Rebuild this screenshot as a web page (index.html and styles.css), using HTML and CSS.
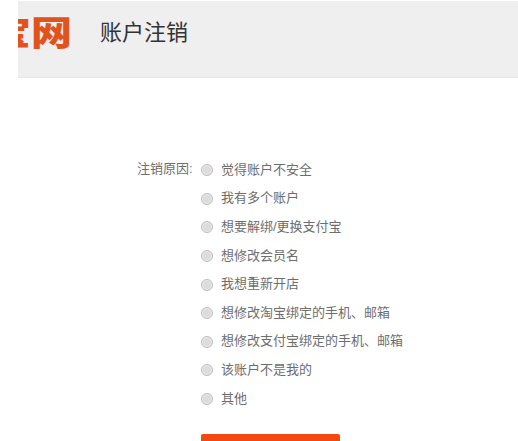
FILE: index.html
```html
<!DOCTYPE html>
<html lang="zh-CN">
<head>
  <meta charset="UTF-8">
  <title>账户注销</title>
  <link rel="stylesheet" href="styles.css">
</head>
<body>
  <header class="top">
    <div class="logo"><span>淘宝网</span></div>
    <h1>账户注销</h1>
  </header>
  <form class="form">
    <div class="field-label">注销原因:</div>
    <div class="reasons">
      <label class="reason"><i class="radio"></i>觉得账户不安全</label>
      <label class="reason"><i class="radio"></i>我有多个账户</label>
      <label class="reason"><i class="radio"></i>想要解绑/更换支付宝</label>
      <label class="reason"><i class="radio"></i>想修改会员名</label>
      <label class="reason"><i class="radio"></i>我想重新开店</label>
      <label class="reason"><i class="radio"></i>想修改淘宝绑定的手机、邮箱</label>
      <label class="reason"><i class="radio"></i>想修改支付宝绑定的手机、邮箱</label>
      <label class="reason"><i class="radio"></i>该账户不是我的</label>
      <label class="reason"><i class="radio"></i>其他</label>
      <div class="submit"></div>
    </div>
  </form>
</body>
</html>
```

FILE: styles.css
```css
html, body { margin: 0; height: 441px; overflow: hidden; background: #fff; }
body { font-family: "Liberation Sans", "Noto Sans CJK SC", sans-serif; color: #666; }
.top { display: flex; align-items: flex-start; height: 76px; margin: 1px 0 0 18px; background: #efefef; border-bottom: 1px solid #e8e8e8; }
.logo { display: flex; justify-content: flex-end; width: 54px; height: 48px; margin-top: 6px; overflow: hidden; }
.logo span { flex: none; font-family: "Noto Sans CJK SC", sans-serif; font-size: 38px; font-weight: 900; line-height: 48px; color: #e2531c; transform: scale(1.08, 0.9); transform-origin: right center; }
.top h1 { margin: 16px 0 0 28px; font-size: 22px; font-weight: 400; line-height: 32px; color: #333; }
.form { display: flex; padding: 76px 0 0 137px; }
.field-label { width: 64px; font-size: 13px; line-height: 29px; color: #6e6e6e; }
.reasons { display: flex; flex-direction: column; }
.reason { display: flex; align-items: center; height: 28.6px; font-size: 13px; color: #6e6e6e; }
.radio { flex: none; box-sizing: border-box; width: 12px; height: 12px; margin: 4px 8px 0 0; border: 1px solid #bdbdbd; border-radius: 50%; background: #dcdcdc; box-shadow: inset 0 0 0 1px #eee; }
.submit { width: 139px; height: 40px; margin-top: 23px; background: #f3480f; border-radius: 2px; }
```
